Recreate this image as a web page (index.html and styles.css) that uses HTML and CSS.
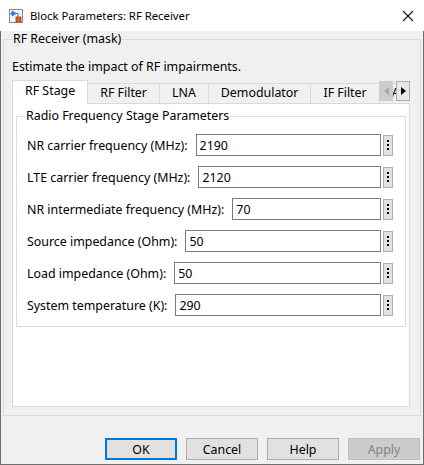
FILE: index.html
```html
<!DOCTYPE html>
<html lang="en">
<head>
    <meta charset="UTF-8">
    <title>Block Parameters: RF Receiver</title>
    <link rel="stylesheet" href="styles.css">
</head>
<body>
    <div class="window">
        <div class="titlebar">
            <svg class="app-icon" width="14" height="14" viewBox="0 0 14 14">
                <rect x="0.5" y="0.5" width="13" height="13" fill="#f4f4f4" stroke="#8a8a8a"/>
                <path d="M3 2 L3 7 M3 2 L7 4.5 L3 7" fill="#2a7fd4" stroke="#2a7fd4" stroke-width="1"/>
                <path d="M1 4.5 H3 M7 4.5 H9 V8" fill="none" stroke="#2a7fd4"/>
                <rect x="7" y="8" width="5" height="5" fill="#e0621a" stroke="#a03c0a" stroke-width="0.8"/>
            </svg>
            <span class="title">Block Parameters: RF Receiver</span>
            <svg class="close" width="12" height="12" viewBox="0 0 12 12">
                <path d="M1 1 L11 11 M11 1 L1 11" stroke="#111" stroke-width="1.1"/>
            </svg>
        </div>
        <div class="content">
            <fieldset class="mask">
                <legend>RF Receiver (mask)</legend>
                <div class="desc">Estimate the impact of RF impairments.</div>

                <div class="tabbar">
                    <div class="tabs">
                        <div class="tab active">RF Stage</div>
                        <div class="tab">RF Filter</div>
                        <div class="tab">LNA</div>
                        <div class="tab">Demodulator</div>
                        <div class="tab">IF Filter</div>
                        <div class="tab">Amplifier</div>
                    </div>
                    <div class="scroll">
                        <div class="scroll-btn disabled">
                            <svg width="5" height="8" viewBox="0 0 5 8"><path d="M5 0 L0 4 L5 8 Z" fill="#a8a8a8"/></svg>
                        </div>
                        <div class="scroll-btn next">
                            <svg width="5" height="8" viewBox="0 0 5 8"><path d="M0 0 L5 4 L0 8 Z" fill="#000"/></svg>
                        </div>
                    </div>
                </div>

                <div class="pane">
                    <fieldset class="group">
                        <legend>Radio Frequency Stage Parameters</legend>

                        <div class="row">
                            <label for="nr_freq">NR carrier frequency (MHz):</label>
                            <input type="text" id="nr_freq" value="2190">
                            <button class="more"><span></span><span></span><span></span></button>
                        </div>
                        <div class="row">
                            <label for="lte_freq">LTE carrier frequency (MHz):</label>
                            <input type="text" id="lte_freq" value="2120">
                            <button class="more"><span></span><span></span><span></span></button>
                        </div>
                        <div class="row">
                            <label for="nr_if">NR intermediate frequency (MHz):</label>
                            <input type="text" id="nr_if" value="70">
                            <button class="more"><span></span><span></span><span></span></button>
                        </div>
                        <div class="row">
                            <label for="src_z">Source impedance (Ohm):</label>
                            <input type="text" id="src_z" value="50">
                            <button class="more"><span></span><span></span><span></span></button>
                        </div>
                        <div class="row">
                            <label for="load_z">Load impedance (Ohm):</label>
                            <input type="text" id="load_z" value="50">
                            <button class="more"><span></span><span></span><span></span></button>
                        </div>
                        <div class="row">
                            <label for="temp">System temperature (K):</label>
                            <input type="text" id="temp" value="290">
                            <button class="more"><span></span><span></span><span></span></button>
                        </div>
                    </fieldset>
                </div>
            </fieldset>

            <div class="buttons">
                <button class="btn default">OK</button>
                <button class="btn">Cancel</button>
                <button class="btn">Help</button>
                <button class="btn" disabled>Apply</button>
            </div>
        </div>
    </div>
</body>
</html>
```

FILE: styles.css
```css
* {
    margin: 0;
    padding: 0;
    box-sizing: border-box;
}
body {
    font-family: "Noto Sans", "Open Sans", sans-serif;
    font-size: 12.4px;
    color: #000;
    background: #fff;
}
.window {
    width: 424px;
    height: 465px;
    display: flex;
    flex-direction: column;
}
.titlebar {
    height: 31px;
    background: #fff;
    display: flex;
    align-items: center;
    padding-left: 9px;
    padding-right: 10px;
}
.app-icon {
    margin-right: 7px;
}
.title {
    flex: 1;
    font-size: 11.3px;
    line-height: 16px;
}
.close {
    margin-top: 1px;
}
.content {
    flex: 1;
    background: #f0f0f0;
    border: 1px solid #6e6e6e;
    border-top: none;
    padding: 0 2px 4px 2px;
    display: flex;
    flex-direction: column;
}
fieldset {
    border: 1px solid #dcdcdc;
    min-width: 0;
}
legend {
    line-height: 16px;
    padding: 0 1px;
}
.mask {
    height: 385px;
    padding: 0 10px 8px 8px;
}
.desc {
    line-height: 16px;
    margin-top: 12px;
}
.tabbar {
    position: relative;
    margin-top: 5px;
}
.tabs {
    display: flex;
    align-items: flex-end;
    height: 24px;
    overflow: hidden;
    box-shadow: inset 0 -1px #d9d9d9;
}
.tab {
    height: 20px;
    line-height: 18px;
    margin-bottom: 1px;
    padding: 0 12px;
    border: 1px solid #d9d9d9;
    border-bottom: none;
    margin-left: -1px;
    background: #f0f0f0;
    white-space: nowrap;
}
.tab:first-child {
    margin-left: 0;
}
.tab.active {
    height: 24px;
    line-height: 20px;
    margin-bottom: 0;
    background: #fff;
}
.scroll {
    position: absolute;
    right: 0;
    top: 1px;
    display: flex;
    gap: 3px;
}
.scroll-btn {
    width: 14px;
    height: 20px;
    display: flex;
    align-items: center;
    justify-content: center;
    border: 1px solid #adadad;
    background: #e8e8e8;
}
.scroll-btn.disabled {
    background: #cccccc;
    border-color: #cccccc;
}
.pane {
    height: 303px;
    background: #fff;
    border: 1px solid #d9d9d9;
    border-top: none;
    padding: 4px 3px 0 3px;
}
.group {
    height: 219px;
    padding: 0 12px 9px 8px;
}
.row {
    display: flex;
    align-items: center;
    height: 22px;
    margin-top: 10px;
    padding-left: 2px;
}
.row label {
    margin-right: 8px;
    white-space: nowrap;
}
.row input {
    flex: 1;
    min-width: 0;
    height: 22px;
    border: 1px solid #7a7a7a;
    padding: 0 3px;
    font-family: inherit;
    font-size: 12.4px;
    outline: none;
}
.more {
    width: 10px;
    height: 21px;
    margin-left: 2px;
    border: 1px solid #adadad;
    background: #e1e1e1;
    display: flex;
    flex-direction: column;
    align-items: center;
    justify-content: center;
    gap: 2px;
}
.more span {
    width: 2px;
    height: 2px;
    background: #000;
}
.buttons {
    display: flex;
    justify-content: flex-end;
    gap: 9px;
    margin-top: 22px;
    padding-right: 1px;
}
.btn {
    width: 72px;
    height: 22px;
    border: 1px solid #adadad;
    background: #e1e1e1;
    font-family: inherit;
    font-size: 12.4px;
    color: #000;
}
.btn.default {
    border: 2px solid #0078d7;
}
.btn:disabled {
    background: #cccccc;
    border-color: #bfbfbf;
    color: #838383;
}
```
